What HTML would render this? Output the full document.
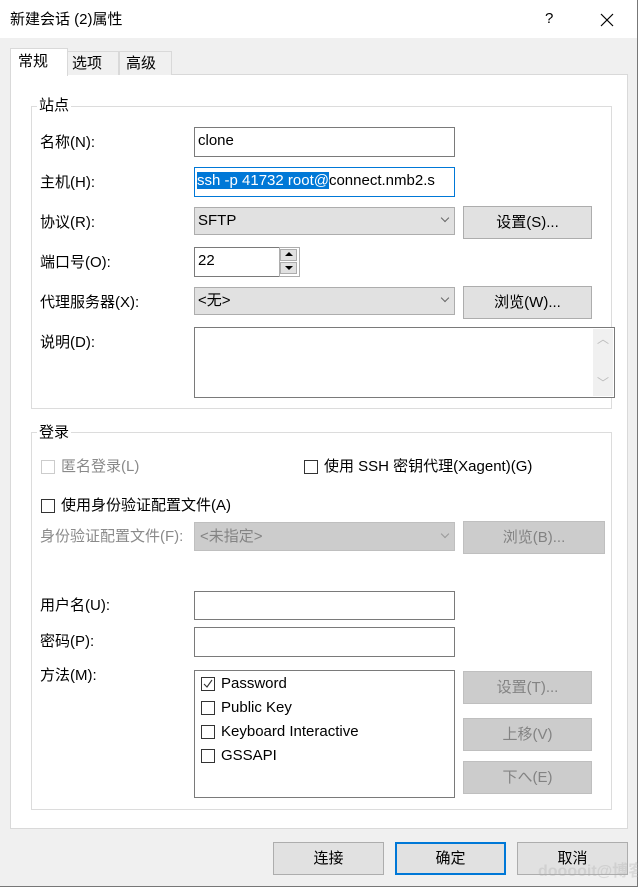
<!DOCTYPE html>
<html><head><meta charset="utf-8"><style>
*{box-sizing:border-box;margin:0;padding:0}
body{width:638px;height:887px;background:#f0f0f0;position:relative;overflow:hidden;font-family:"Liberation Sans","Noto Sans CJK SC",sans-serif;font-size:15px;color:#000}
.a{position:absolute}
.t{position:absolute;white-space:nowrap;line-height:16px}
.in{position:absolute;background:#fff;border:1px solid #7a7a7a}
.cb{position:absolute;background:#e1e1e1;border:1px solid #adadad}
.btn{position:absolute;background:#e1e1e1;border:1px solid #adadad;text-align:center;font-size:15px}
.dis{background:#cccccc;border-color:#bfbfbf;color:#838383}
.chk{position:absolute;width:14px;height:14px;border:1px solid #333;background:#fff}
.grp{position:absolute;border:1px solid #dcdcdc}
.lg{position:absolute;background:#fff;padding:0 2px;line-height:16px}
.arr{position:absolute;width:6px;height:6px;border-right:1px solid #666;border-bottom:1px solid #666;transform:rotate(45deg)}
</style></head><body>
<div class="a" style="left:0;top:0;width:638px;height:38px;background:#fff"></div>
<div class="a" style="right:0;top:0;width:1px;height:887px;background:#777"></div>
<div class="a" style="left:0;bottom:0;width:638px;height:1px;background:#777"></div>
<div class="t" style="left:10px;top:12px">新建会话 (2)属性</div>
<div class="t" style="left:545px;top:11px;font-size:15px">?</div>
<svg class="a" style="left:600px;top:13px" width="14" height="14"><path d="M1 1L13 13M13 1L1 13" stroke="#000" stroke-width="1.2"/></svg>

<!-- tabs -->
<div class="a" style="left:10px;top:74px;width:618px;height:755px;background:#fff;border:1px solid #d9d9d9"></div>
<div class="a" style="left:67px;top:51px;width:52px;height:24px;background:#f0f0f0;border:1px solid #d9d9d9;border-bottom:none"></div>
<div class="a" style="left:119px;top:51px;width:53px;height:24px;background:#f0f0f0;border:1px solid #d9d9d9;border-bottom:none"></div>
<div class="a" style="left:10px;top:48px;width:58px;height:28px;background:#fff;border:1px solid #d9d9d9;border-bottom:none"></div>
<div class="t" style="left:18px;top:54px">常规</div>
<div class="t" style="left:72px;top:56px">选项</div>
<div class="t" style="left:126px;top:56px">高级</div>

<!-- 站点 -->
<div class="grp" style="left:31px;top:106px;width:581px;height:303px"></div>
<div class="lg" style="left:37px;top:98px">站点</div>
<div class="t" style="left:40px;top:135px">名称(N):</div>
<div class="t" style="left:40px;top:175px">主机(H):</div>
<div class="t" style="left:40px;top:215px">协议(R):</div>
<div class="t" style="left:40px;top:255px">端口号(O):</div>
<div class="t" style="left:40px;top:295px">代理服务器(X):</div>
<div class="t" style="left:40px;top:335px">说明(D):</div>

<div class="in" style="left:194px;top:127px;width:261px;height:30px"></div>
<div class="t" style="left:198px;top:133px;font-size:15px">clone</div>
<div class="in" style="left:194px;top:167px;width:261px;height:30px;border-color:#0078d7;overflow:hidden">
<span class="t" style="left:2px;top:5px;font-size:15px"><span style="background:#0078d7;color:#fff">ssh -p 41732 root@</span>connect.nmb2.s</span></div>
<div class="cb" style="left:194px;top:207px;width:261px;height:28px"></div>
<div class="t" style="left:198px;top:213px">SFTP</div>
<div class="arr" style="left:442px;top:215px"></div>
<div class="btn" style="left:463px;top:206px;width:129px;height:33px;line-height:31px">设置(S)...</div>
<div class="in" style="left:194px;top:247px;width:86px;height:30px"></div>
<div class="t" style="left:198px;top:253px">22</div>
<div class="a" style="left:279px;top:247px;width:21px;height:30px;border:1px solid #adadad;background:#fff"></div>
<div class="a" style="left:280px;top:249px;width:17px;height:12px;background:#e1e1e1;border:1px solid #adadad"></div>
<div class="a" style="left:280px;top:262px;width:17px;height:12px;background:#e1e1e1;border:1px solid #adadad"></div>
<div class="a" style="left:285px;top:252px;border:4px solid transparent;border-bottom:4px solid #000;border-top:none"></div>
<div class="a" style="left:285px;top:266px;border:4px solid transparent;border-top:4px solid #000;border-bottom:none"></div>
<div class="cb" style="left:194px;top:287px;width:261px;height:28px"></div>
<div class="t" style="left:198px;top:293px">&lt;无&gt;</div>
<div class="arr" style="left:442px;top:295px"></div>
<div class="btn" style="left:463px;top:286px;width:129px;height:33px;line-height:31px">浏览(W)...</div>
<div class="in" style="left:194px;top:327px;width:421px;height:71px"></div>
<div class="a" style="left:593px;top:329px;width:20px;height:67px;background:#f0f0f0"></div>
<div class="t" style="left:597px;top:331px;color:#bbb;font-size:12px">︿</div>
<div class="t" style="left:597px;top:375px;color:#bbb;font-size:12px">﹀</div>

<!-- 登录 -->
<div class="grp" style="left:31px;top:432px;width:581px;height:378px"></div>
<div class="lg" style="left:37px;top:425px">登录</div>
<div class="chk" style="left:41px;top:460px;border-color:#ccc"></div>
<div class="t" style="left:61px;top:459px;color:#8a8a8a">匿名登录(L)</div>
<div class="chk" style="left:304px;top:460px"></div>
<div class="t" style="left:324px;top:459px">使用 SSH 密钥代理(Xagent)(G)</div>
<div class="chk" style="left:41px;top:499px"></div>
<div class="t" style="left:61px;top:498px">使用身份验证配置文件(A)</div>
<div class="t" style="left:40px;top:529px;color:#8a8a8a">身份验证配置文件(F):</div>
<div class="cb" style="left:194px;top:522px;width:261px;height:29px;background:#cccccc;border-color:#bfbfbf"></div>
<div class="t" style="left:200px;top:529px;color:#838383">&lt;未指定&gt;</div>
<div class="arr" style="left:442px;top:531px;border-color:#999"></div>
<div class="btn dis" style="left:463px;top:521px;width:142px;height:33px;line-height:31px">浏览(B)...</div>

<div class="t" style="left:40px;top:598px">用户名(U):</div>
<div class="in" style="left:194px;top:591px;width:261px;height:29px"></div>
<div class="t" style="left:40px;top:634px">密码(P):</div>
<div class="in" style="left:194px;top:627px;width:261px;height:30px"></div>
<div class="t" style="left:40px;top:668px">方法(M):</div>
<div class="in" style="left:194px;top:670px;width:261px;height:128px"></div>
<div class="chk" style="left:201px;top:677px"></div>
<svg class="a" style="left:202px;top:678px" width="12" height="12"><path d="M2 6L5 9L10 2" stroke="#333" stroke-width="1.1" fill="none"/></svg>
<div class="t" style="left:221px;top:676px;font-size:15px">Password</div>
<div class="chk" style="left:201px;top:701px"></div>
<div class="t" style="left:221px;top:700px;font-size:15px">Public Key</div>
<div class="chk" style="left:201px;top:725px"></div>
<div class="t" style="left:221px;top:724px;font-size:15px">Keyboard Interactive</div>
<div class="chk" style="left:201px;top:749px"></div>
<div class="t" style="left:221px;top:748px;font-size:15px">GSSAPI</div>
<div class="btn dis" style="left:463px;top:671px;width:129px;height:33px;line-height:31px">设置(T)...</div>
<div class="btn dis" style="left:463px;top:718px;width:129px;height:33px;line-height:31px">上移(V)</div>
<div class="btn dis" style="left:463px;top:761px;width:129px;height:33px;line-height:31px">下へ(E)</div>

<!-- bottom -->
<div class="btn" style="left:273px;top:842px;width:111px;height:33px;line-height:31px">连接</div>
<div class="btn" style="left:395px;top:842px;width:111px;height:33px;line-height:29px;border:2px solid #0078d7">确定</div>
<div class="btn" style="left:517px;top:842px;width:111px;height:33px;line-height:31px">取消</div>
<div class="t" style="left:538px;top:864px;color:rgba(170,170,170,0.3);font-size:16px;font-weight:bold">dooooit@博客</div>
</body></html>
